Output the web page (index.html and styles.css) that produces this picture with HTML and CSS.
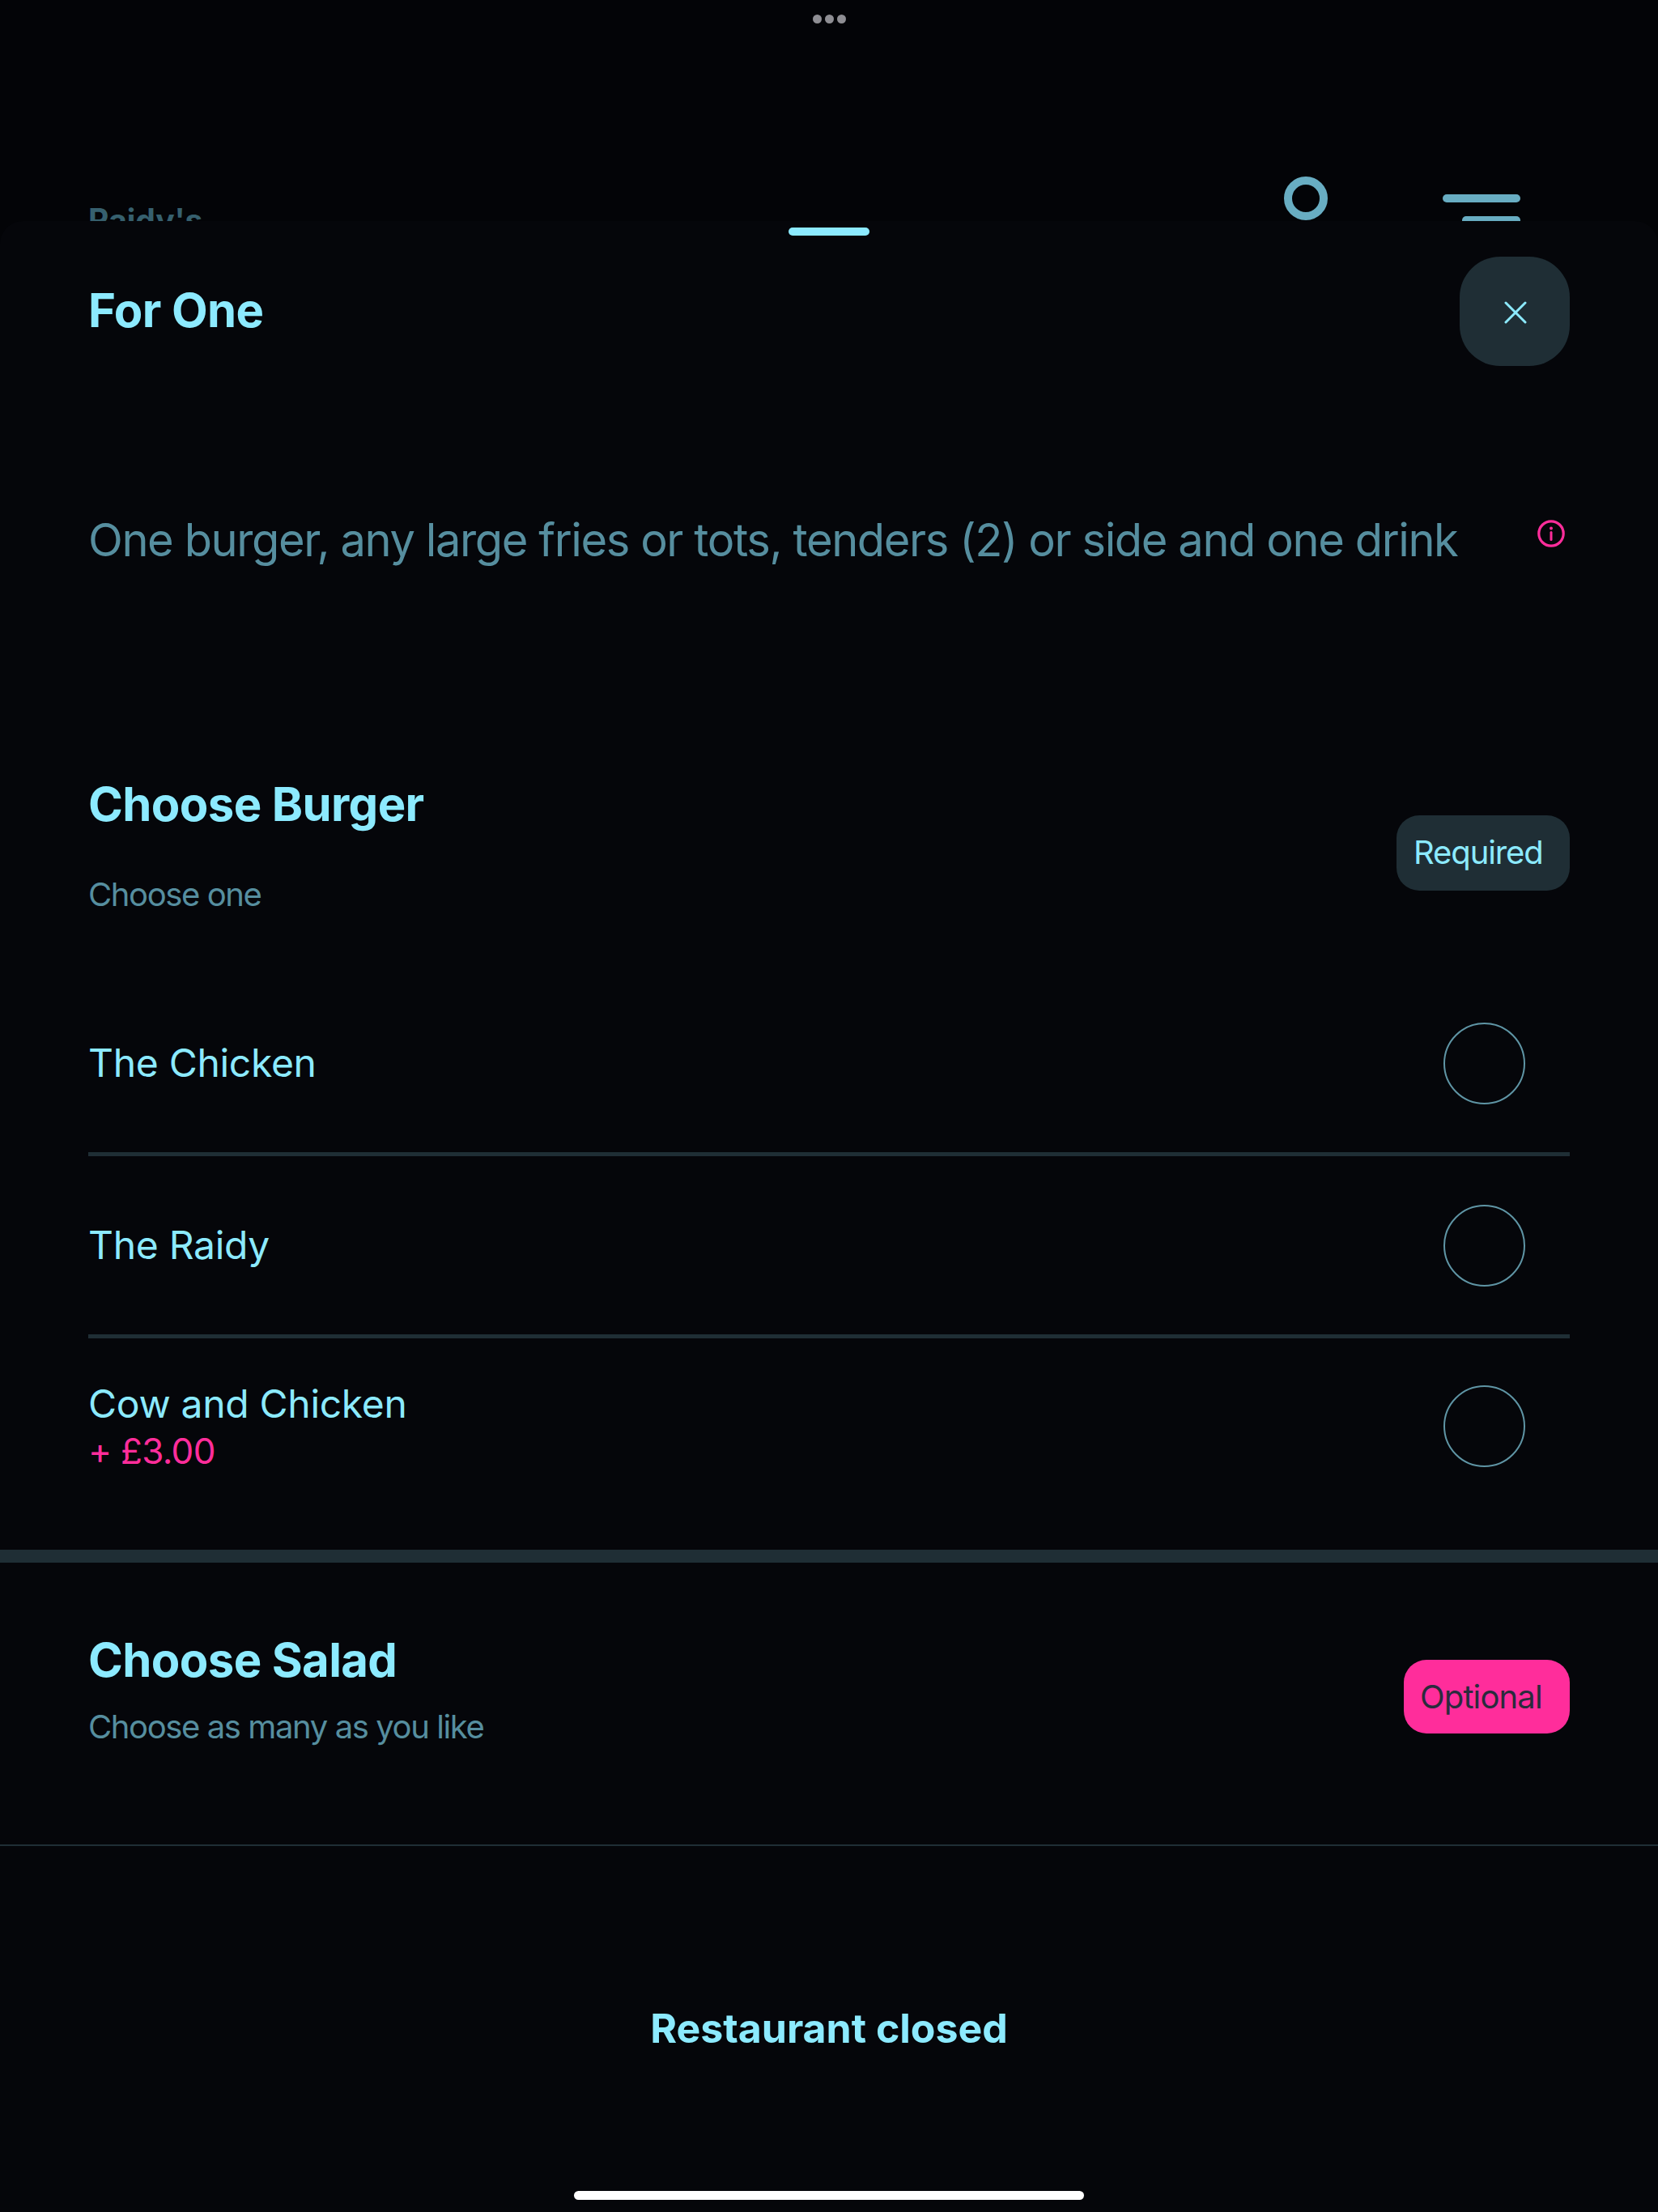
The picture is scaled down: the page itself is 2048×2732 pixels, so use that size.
FILE: index.html
```html
<!DOCTYPE html>
<html lang="en">
<head>
<meta charset="utf-8">
<title>For One</title>
<link rel="stylesheet" href="styles.css">
</head>
<body>
<div class="backdrop">
  <div class="dots"><i></i><i></i><i></i></div>
  <div class="venue-bar">
    <span class="venue">Raidy's</span>
    <div class="venue-actions">
      <span class="ring"></span>
      <div class="menu"><i></i><i></i></div>
    </div>
  </div>
</div>
<main class="sheet">
  <div class="handle"></div>
  <header class="sheet-head">
    <h1 class="title">For One</h1>
    <button class="close" aria-label="Close">
      <svg class="close-icon" width="28" height="28" viewBox="0 0 28 28"><path d="M2 2 26 26M26 2 2 26" fill="none" stroke="#8ceaff" stroke-width="3" stroke-linecap="round"/></svg>
    </button>
  </header>
  <div class="desc-row">
    <p class="desc">One burger, any large fries or tots, tenders (2) or side and one drink</p>
    <svg class="info" width="34" height="34" viewBox="0 0 34 34"><circle cx="17" cy="17" r="15.2" fill="none" stroke="#ff2d9b" stroke-width="3.2"/><circle cx="17" cy="10.5" r="2" fill="#ff2d9b"/><path d="M17 15.5v9" stroke="#ff2d9b" stroke-width="3" stroke-linecap="round"/></svg>
  </div>
  <section class="group-burger">
    <div class="group-head">
      <div class="group-text">
        <h2 class="group-title">Choose Burger</h2>
        <p class="group-sub sub-burger">Choose one</p>
      </div>
      <span class="tag tag-required">Required</span>
    </div>
    <div class="options">
      <div class="option">
        <div class="option-text"><span class="option-name">The Chicken</span></div>
        <span class="radio"></span>
      </div>
      <div class="option">
        <div class="option-text"><span class="option-name">The Raidy</span></div>
        <span class="radio"></span>
      </div>
      <div class="option">
        <div class="option-text"><span class="option-name">Cow and Chicken</span><span class="option-price">+ £3.00</span></div>
        <span class="radio"></span>
      </div>
    </div>
  </section>
  <section class="group-salad">
    <div class="group-head">
      <div class="group-text">
        <h2 class="group-title">Choose Salad</h2>
        <p class="group-sub sub-salad">Choose as many as you like</p>
      </div>
      <span class="tag tag-optional">Optional</span>
    </div>
  </section>
  <footer class="closed">Restaurant closed</footer>
  <div class="home-bar"></div>
</main>
</body>
</html>
```
FILE: styles.css
```css
* { box-sizing: border-box; }
html, body { margin: 0; padding: 0; }
body {
  width: 2048px;
  height: 2732px;
  overflow: hidden;
  background: #030407;
  font-family: Inter, "Liberation Sans", sans-serif;
  color: #8ceaff;
}
h1, h2, p { margin: 0; }

.backdrop { height: 273px; overflow: hidden; padding-top: 18px; }
.dots { display: flex; justify-content: center; gap: 4px; height: 11px; }
.dots i { width: 11px; height: 11px; border-radius: 50%; background: #8e8e93; }
.venue-bar { display: flex; justify-content: space-between; padding: 189px 170px 0 109px; }
.venue { font-size: 39px; font-weight: 700; line-height: 44px; color: #36606e; margin-top: 32px; letter-spacing: -0.1px; }
.venue-actions { display: flex; gap: 142px; }
.ring { width: 54px; height: 54px; border: 10px solid #68adc2; border-radius: 50%; }
.menu { width: 96px; padding-top: 22px; display: flex; flex-direction: column; align-items: flex-end; gap: 17px; }
.menu i { height: 10px; border-radius: 5px; background: #68adc2; width: 96px; }
.menu i + i { width: 72px; }

.sheet {
  height: 2459px;
  background: #05060a;
  border-radius: 28px 28px 0 0;
  overflow: hidden;
  display: flex;
  flex-direction: column;
}
.handle { width: 100px; height: 10px; border-radius: 5px; background: #8ceaff; margin: 8px auto 26px; }
.sheet-head { display: flex; justify-content: space-between; align-items: center; padding: 0 109px; }
.title { font-size: 58px; font-weight: 700; line-height: 68px; letter-spacing: -0.6px; margin-top: -3px; }
.close {
  width: 136px; height: 135px; border: 0; padding: 0; border-radius: 50px;
  background: #1f2e35; display: flex; align-items: center; justify-content: center;
}
.close-icon { margin: 3px 0 0 2px; }
.desc-row { display: flex; justify-content: space-between; align-items: flex-start; padding: 181px 115px 0 109px; }
.desc { font-size: 56px; line-height: 68px; color: #568e9f; letter-spacing: -1.4px; white-space: nowrap; }
.info { margin-top: 9px; }

.group-burger { padding-top: 258px; border-bottom: 16px solid #1f2e35; }
.group-head { display: flex; justify-content: space-between; align-items: center; padding: 0 109px; }
.group-title { font-size: 58px; font-weight: 700; line-height: 68px; letter-spacing: -0.6px; }
.group-sub { font-size: 40px; line-height: 46px; color: #568e9f; letter-spacing: -1.4px; }
.sub-burger { margin-top: 55px; }
.sub-salad { margin-top: 26px; }
.tag { font-size: 40px; line-height: 48px; border-radius: 28px; letter-spacing: -1px; }
.tag-required { width: 214px; margin-top: 20px; padding: 22px 0 23px 21px; background: #1f2e35; color: #8ceaff; letter-spacing: -1.1px; }
.tag-optional { width: 205px; margin-top: 18px; padding: 22px 0 21px 20px; background: #ff2d9b; color: #2a2b3d; letter-spacing: -0.85px; }

.options { margin: 75px 109px 0; }
.option {
  display: flex; justify-content: space-between; align-items: center;
  height: 225px;
  border-bottom: 5px solid #1f2e35;
  padding-right: 55px;
}
.option:last-child { border-bottom: 0; height: 261px; padding-bottom: 44px; }
.option-text { display: flex; flex-direction: column; }
.option-name { font-size: 48px; line-height: 58px; letter-spacing: -0.3px; }
.option-price { font-size: 44px; line-height: 54px; margin-top: 2px; color: #ff2d9b; letter-spacing: -0.7px; }
.radio { width: 101px; height: 101px; border: 2px solid #5f95a5; border-radius: 50%; }

.group-salad { padding: 86px 0 122px; border-bottom: 2px solid #1f2e35; }
.closed { font-size: 50px; font-weight: 700; line-height: 60px; text-align: center; margin-top: 195px; }
.home-bar { width: 630px; height: 11px; border-radius: 6px; background: #fff; margin: 171px auto 0; }
```
